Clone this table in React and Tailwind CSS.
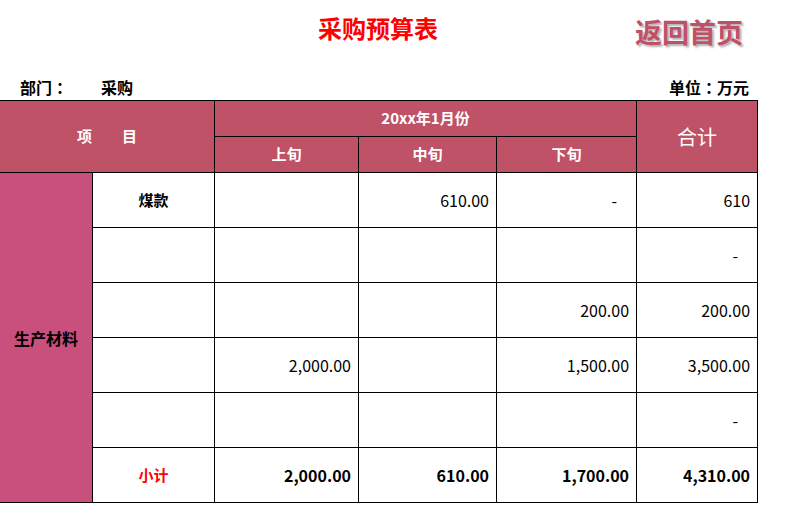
import React from 'react';

const font = { fontFamily: '"Noto Sans CJK SC", "Noto Sans", sans-serif' };

const rows = [
    { name: '煤款', a: '', b: '610.00', c: '-', t: '610' },
    { name: '', a: '', b: '', c: '', t: '-' },
    { name: '', a: '', b: '', c: '200.00', t: '200.00' },
    { name: '', a: '2,000.00', b: '', c: '1,500.00', t: '3,500.00' },
    { name: '', a: '', b: '', c: '', t: '-' },
];

function Num({ v }) {
    // accounting-style dash sits further in from the right edge
    if (v === '-') return <td className="border border-black text-right pr-[19px] text-[16px]">-</td>;
    return <td className="border border-black text-right pr-[7px] text-[16px]">{v}</td>;
}

function Colon() {
    return <span className="font-['Noto_Sans_CJK_TC']">：</span>;
}

export default function App() {
    return (
        <div className="w-[795px] h-[523px] bg-white text-black overflow-hidden" style={font}>
            <div className="relative h-[70px]">
                <h1 className="absolute left-[318px] top-[12px] text-[24px] font-bold text-[#ff0000] leading-[32px]">采购预算表</h1>
                <a className="absolute left-[635px] top-[14px] text-[27px] font-bold text-[#bf5068] leading-[36px] [text-shadow:2px_2px_2px_rgba(0,0,0,0.3)]">返回首页</a>
            </div>
            <div className="flex items-end h-[30px] pb-[3px] text-[16px] font-bold leading-[20px]">
                <span className="ml-[20px] w-[81px]">部门<Colon /></span>
                <span>采购</span>
                <span className="ml-auto mr-[46px]">单位<Colon />万元</span>
            </div>
            <table className="table-fixed border-collapse w-[758px] -ml-px">
                <colgroup>
                    <col className="w-[93px]" />
                    <col className="w-[122px]" />
                    <col className="w-[144px]" />
                    <col className="w-[138px]" />
                    <col className="w-[140px]" />
                    <col className="w-[121px]" />
                </colgroup>
                <tbody>
                    <tr className="h-[36px]">
                        <td colSpan={2} rowSpan={2} className="border border-black bg-[#c05267] text-white font-bold text-[15px] text-center">项　　目</td>
                        <td colSpan={3} className="border border-black bg-[#c05267] text-white font-bold text-[15px] text-center">20xx年1月份</td>
                        <td rowSpan={2} className="border border-black bg-[#c05267] text-white text-[20px] text-center">合计</td>
                    </tr>
                    <tr className="h-[36px]">
                        <td className="border border-black bg-[#c05267] text-white font-bold text-[15px] text-center">上旬</td>
                        <td className="border border-black bg-[#c05267] text-white font-bold text-[15px] text-center">中旬</td>
                        <td className="border border-black bg-[#c05267] text-white font-bold text-[15px] text-center">下旬</td>
                    </tr>
                    {rows.map((r, i) => (
                        <tr key={i} className="h-[55px]">
                            {i === 0 && (
                                <td rowSpan={6} className="border border-black bg-[#c94f7d] text-[16px] font-bold text-center">生产材料</td>
                            )}
                            <td className="border border-black text-center text-[15px] font-bold">{r.name}</td>
                            <Num v={r.a} />
                            <Num v={r.b} />
                            <Num v={r.c} />
                            <Num v={r.t} />
                        </tr>
                    ))}
                    <tr className="h-[55px]">
                        <td className="border border-black text-center text-[15px] font-bold text-[#ff0000]">小计</td>
                        <td className="border border-black text-right pr-[7px] text-[16px] font-bold">2,000.00</td>
                        <td className="border border-black text-right pr-[7px] text-[16px] font-bold">610.00</td>
                        <td className="border border-black text-right pr-[7px] text-[16px] font-bold">1,700.00</td>
                        <td className="border border-black text-right pr-[7px] text-[16px] font-bold">4,310.00</td>
                    </tr>
                </tbody>
            </table>
        </div>
    );
}
